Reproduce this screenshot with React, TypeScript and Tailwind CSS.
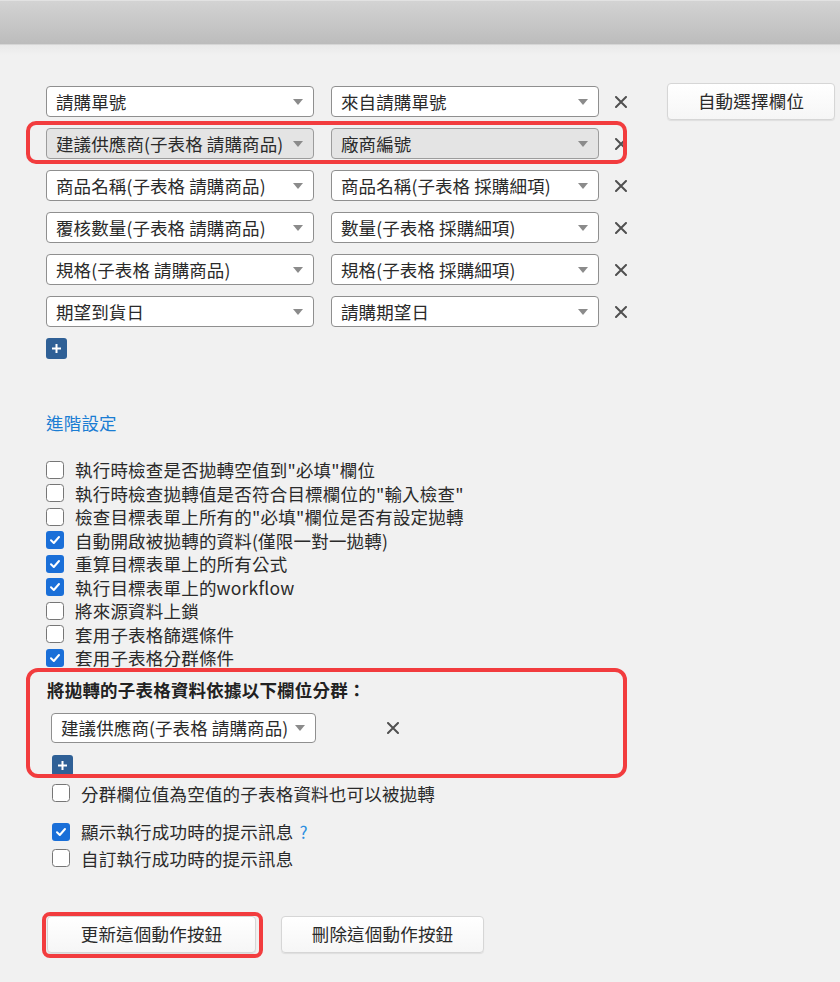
import React from "react";

function Arrow() {
  return (
    <svg width="10" height="6" viewBox="0 0 10 6" className="ml-auto shrink-0">
      <polygon points="0,0 10,0 5,6" fill="#8b8b8b" />
    </svg>
  );
}

function Select({ label, disabled, wide }: { label: string; disabled?: boolean; wide?: boolean }) {
  return (
    <div
      className={
        disabled
          ? "flex items-center h-[31px] w-[268px] rounded-[4px] border border-[#9c9c9c] bg-[#e4e4e4] pl-[9px] pr-[10px]"
          : wide
          ? "flex items-center h-[30px] w-[265px] rounded-[4px] border border-[#8f8f8f] bg-white pl-[9px] pr-[10px]"
          : "flex items-center h-[31px] w-[268px] rounded-[4px] border border-[#8f8f8f] bg-white pl-[9px] pr-[10px]"
      }
    >
      <span className="whitespace-nowrap text-[17.5px] leading-[24px] tracking-[0.1px] text-[#2a2a2a]">{label}</span>
      <Arrow />
    </div>
  );
}

function XIcon() {
  return (
    <svg width="12" height="12" viewBox="0 0 12 12" className="shrink-0">
      <path d="M1 1 L11 11 M11 1 L1 11" stroke="#505050" strokeWidth="2" strokeLinecap="round" />
    </svg>
  );
}

function Plus() {
  return (
    <div className="flex h-[21px] w-[21px] items-center justify-center rounded-[3px] bg-[#2f6096]">
      <svg width="11" height="11" viewBox="0 0 11 11">
        <path d="M5.5 1 V10 M1 5.5 H10" stroke="#fff" strokeWidth="2" />
      </svg>
    </div>
  );
}

function Check({ checked, label, children }: { checked?: boolean; label: string; children?: React.ReactNode }) {
  return (
    <div className="flex items-center h-[23.5px]">
      {checked ? (
        <div className="flex h-[18px] w-[18px] shrink-0 items-center justify-center rounded-[3px] bg-[#1a6fd8]">
          <svg width="12" height="12" viewBox="0 0 12 12">
            <path d="M2 6.3 L4.8 9 L10 3" stroke="#fff" strokeWidth="2" fill="none" strokeLinecap="round" strokeLinejoin="round" />
          </svg>
        </div>
      ) : (
        <div className="h-[18px] w-[18px] shrink-0 rounded-[3.5px] border-[1.5px] border-[#767676] bg-white" />
      )}
      <span className="ml-[11px] whitespace-nowrap text-[17.5px] leading-[23.5px] tracking-[0.2px] text-[#2a2a2a]">{label}</span>
      {children}
    </div>
  );
}

const rows: [string, string, boolean?][] = [
  ["請購單號", "來自請購單號"],
  ["建議供應商(子表格 請購商品)", "廠商編號", true],
  ["商品名稱(子表格 請購商品)", "商品名稱(子表格 採購細項)"],
  ["覆核數量(子表格 請購商品)", "數量(子表格 採購細項)"],
  ["規格(子表格 請購商品)", "規格(子表格 採購細項)"],
  ["期望到貨日", "請購期望日"],
];

const checks: [string, boolean][] = [
  ['執行時檢查是否拋轉空值到"必填"欄位', false],
  ['執行時檢查拋轉值是否符合目標欄位的"輸入檢查"', false],
  ['檢查目標表單上所有的"必填"欄位是否有設定拋轉', false],
  ["自動開啟被拋轉的資料(僅限一對一拋轉)", true],
  ["重算目標表單上的所有公式", true],
  ["執行目標表單上的workflow", true],
  ["將來源資料上鎖", false],
  ["套用子表格篩選條件", false],
  ["套用子表格分群條件", true],
];

export default function App() {
  return (
    <div className="relative min-h-[982px] w-[840px] overflow-hidden bg-[#f1f1f1] font-['Noto_Sans_CJK_TC','Noto_Sans',sans-serif]">
      <div className="h-[45px] border-t border-t-[#e2e2e2] border-b border-b-[#d6d6d6] bg-gradient-to-b from-[#d3d3d3] to-[#bcbcbc]" />
      <div className="h-[10px] bg-gradient-to-b from-[#e9e9e9] to-[#f1f1f1]" />

      <div className="pl-[46px] pt-[31px]">
        <div className="flex flex-col gap-[11px]">
          {rows.map(([a, b, d], i) => (
            <div key={i} className="flex h-[31px] items-center">
              <Select label={a} disabled={d} />
              <div className="ml-[17px]">
                <Select label={b} disabled={d} />
              </div>
              <div className="ml-[16px]">
                <XIcon />
              </div>
              {i === 0 && (
                <button className="ml-[40px] flex h-[37px] w-[168px] items-center justify-center rounded-[4px] border border-[#d6d6d6] bg-gradient-to-b from-white to-[#f6f6f6] text-[17.5px] tracking-[0.2px] text-[#2a2a2a] shadow-[0_1px_1px_rgba(0,0,0,0.08)]">
                  自動選擇欄位
                </button>
              )}
            </div>
          ))}
        </div>

        <div className="mt-[11px]">
          <Plus />
        </div>

        <div className="mt-[52px] text-[17.5px] leading-[24px] tracking-[0.2px] text-[#1a7dd3]">進階設定</div>

        <div className="mt-[23px] flex flex-col">
          {checks.map(([l, c], i) => (
            <Check key={i} label={l} checked={c} />
          ))}
        </div>

        <div className="mt-[8px] ml-[1px] text-[17.5px] font-bold leading-[24px] tracking-[0.2px] text-[#222]">
          將拋轉的子表格資料依據以下欄位分群：
        </div>

        <div className="ml-[5px]">
          <div className="mt-[11px] flex items-center">
            <Select label="建議供應商(子表格 請購商品)" wide />
            <div className="ml-[71px]">
              <XIcon />
            </div>
          </div>
          <div className="mt-[12px] ml-[1px]">
            <Plus />
          </div>
          <div className="mt-[6px] ml-[1px]">
            <Check label="分群欄位值為空值的子表格資料也可以被拋轉" />
          </div>
          <div className="mt-[15px] ml-[1px]">
            <Check label="顯示執行成功時的提示訊息" checked>
              <span className="ml-[6px] text-[17px] leading-[23.5px] text-[#2b8ee0]">?</span>
            </Check>
          </div>
          <div className="mt-[3px] ml-[1px]">
            <Check label="自訂執行成功時的提示訊息" />
          </div>
        </div>

        <div className="mt-[46px] flex items-center">
          <button className="ml-[1px] flex h-[37px] w-[209px] items-center justify-center rounded-[4px] border border-[#d6d6d6] bg-gradient-to-b from-white to-[#f6f6f6] text-[17.5px] tracking-[0.2px] text-[#2a2a2a] shadow-[0_1px_1px_rgba(0,0,0,0.08)]">
            更新這個動作按鈕
          </button>
          <button className="ml-[25px] flex h-[37px] w-[203px] items-center justify-center rounded-[4px] border border-[#d6d6d6] bg-gradient-to-b from-white to-[#f6f6f6] text-[17.5px] tracking-[0.2px] text-[#2a2a2a] shadow-[0_1px_1px_rgba(0,0,0,0.08)]">
            刪除這個動作按鈕
          </button>
        </div>
      </div>

      <div className="pointer-events-none absolute left-[26px] top-[121px] h-[43px] w-[601px] rounded-[10px] border-[4px] border-[#f23c3e]" />
      <div className="pointer-events-none absolute left-[26px] top-[668px] h-[110px] w-[601px] rounded-[12px] border-[4px] border-[#f23c3e]" />
      <div className="pointer-events-none absolute left-[42px] top-[912px] h-[46px] w-[221px] rounded-[8px] border-[4px] border-[#f23c3e]" />
    </div>
  );
}
